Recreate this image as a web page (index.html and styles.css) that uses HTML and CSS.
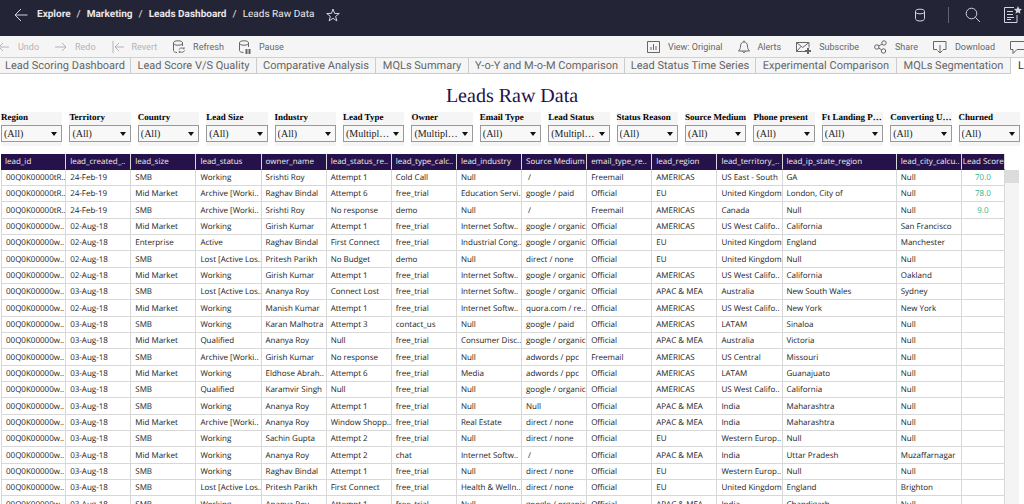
FILE: index.html
```html
<!DOCTYPE html>
<html lang="en">

<head>
    <meta charset="UTF-8">
    <meta name="viewport" content="width=device-width, initial-scale=1.0">
    <title>Leads Raw Data</title>
    <link rel="stylesheet" href="styles.css">
</head>

<body>
    <header class="topbar">
        <button class="icon-btn" aria-label="Back">
            <svg width="14" height="14" viewBox="0 0 14 14"><path d="M13.5 7H1M7 1L1 7l6 6" /></svg>
        </button>
        <nav class="crumbs">
            <a href="#">Explore</a><span>/</span>
            <a href="#">Marketing</a><span>/</span>
            <a href="#">Leads Dashboard</a><span>/</span>
            <span class="current">Leads Raw Data</span>
        </nav>
        <button class="icon-btn" aria-label="Favorite">
            <svg width="14" height="14" viewBox="0 0 14 14"><path d="M7 1l1.6 4.400 4.700.1-3.700 2.900 1.300 4.500L7 10.300l-3.900 2.600 1.300-4.500L.7 5.500l4.700-.1z" /></svg>
        </button>
        <div class="topbar-right">
            <button class="icon-btn" aria-label="Data sources">
                <svg width="12" height="14" viewBox="0 0 12 14"><ellipse cx="6" cy="3.500" rx="4.500" ry="2.300" /><path d="M1.500 3.500v7c0 1.500 1.500 2.500 4.500 2.500s4.500-1 4.500-2.500v-7" /></svg>
            </button>
            <div class="divider"></div>
            <button class="icon-btn" aria-label="Search">
                <svg width="16" height="16" viewBox="0 0 16 16"><circle cx="6.500" cy="6.500" r="5.300" /><path d="M10.500 10.500l4.500 4.500" /></svg>
            </button>
            <button class="icon-btn" aria-label="Content">
                <svg width="19" height="18" viewBox="0 0 19 18"><path d="M11 1.500H1.500v15h12.500V9M4 5.500h6M4 8.500h6M4 11.500h7M4 13.500h4" /><path class="solid" d="M15 0l1.200 2.700 2.800.3-2.100 1.900.6 2.900L15 6.300l-2.500 1.500.6-2.900L11 3l2.800-.3z" /></svg>
            </button>
        </div>
    </header>

    <div class="toolbar">
        <button class="tool disabled">
            <svg width="10" height="14" viewBox="4 0 10 14"><path d="M13 7H3M7 3L3 7l4 4" /></svg>Undo
        </button>
        <button class="tool disabled">
            <svg width="12" height="14" viewBox="0 0 12 14"><path d="M0 7h11M7 3l4 4-4 4" /></svg>Redo
        </button>
        <button class="tool disabled">
            <svg width="12" height="14" viewBox="0 0 12 14"><path d="M1 1v12M12 7H3M7 3L3 7l4 4" /></svg>Revert
        </button>
        <button class="tool">
            <svg width="12" height="14" viewBox="0 0 12 14"><ellipse cx="5" cy="3" rx="4.500" ry="2.200" /><path d="M.5 3v7.500c0 1 1.500 2 3.500 2M9.500 3v3M6 9.500c.7-1.700 3.500-2.200 5-.3v-2M11.500 10.500c-.7 2-3.700 2.500-5.200.5v2" /></svg>Refresh
        </button>
        <button class="tool">
            <svg width="12" height="14" viewBox="0 0 12 14"><ellipse cx="5" cy="3" rx="4.500" ry="2.200" /><path d="M.5 3v7.500c0 1 1.500 2 4 2M9.500 3v4" /><path class="thick" d="M7.500 9v5M10.500 9v5" /></svg>Pause
        </button>
        <button class="tool first-right">
            <svg width="13" height="14" viewBox="0 0 13 14"><path d="M.5 1.500h12v11H.5zM4 10V7M6.500 10V4M9 10V6" /></svg>View: Original
        </button>
        <button class="tool">
            <svg width="12" height="14" viewBox="0 0 12 14"><path d="M.5 11h11c-1.500-1.500-2-3-2-5 0-2.500-1.500-4-3.500-4s-3.500 1.500-3.500 4c0 2-.5 3.500-2 5zM4.500 11c0 2 3 2 3 0M6 2V.5" /></svg>Alerts
        </button>
        <button class="tool">
            <svg width="15" height="14" viewBox="0 0 15 14"><path d="M9 11.500H.5v-9h12.500v5M.5 2.500l6.200 5 6.300-5M.5 11.500l4.500-5" /><path class="thick" d="M12 8v6M9 11h6" /></svg>Subscribe
        </button>
        <button class="tool">
            <svg width="13" height="14" viewBox="0 0 13 14"><circle cx="2.800" cy="7" r="2.200" /><circle cx="10" cy="3" r="2.200" /><circle cx="9.500" cy="11" r="2.200" /><path d="M4.800 6l3.200-1.900M4.800 8l2.800 1.900" /></svg>Share
        </button>
        <button class="tool">
            <svg width="14" height="14" viewBox="0 0 14 14"><path d="M4 9.500H.5v-8h12.500v8H10" /><path d="M7 5v8M4.500 10.500L7 13l2.500-2.500" /></svg>Download
        </button>
        <button class="tool" aria-label="Comments">
            <svg width="14" height="14" viewBox="0 0 14 14"><path d="M16 1.500H.5v8H3v4l4-4h9" /></svg>
        </button>
    </div>

    <nav class="tabs">
        <a class="tab" href="#">Lead Scoring Dashboard</a>
        <a class="tab" href="#">Lead Score V/S Quality</a>
        <a class="tab" href="#">Comparative Analysis</a>
        <a class="tab" href="#">MQLs Summary</a>
        <a class="tab" href="#">Y-o-Y and M-o-M Comparison</a>
        <a class="tab" href="#">Lead Status Time Series</a>
        <a class="tab" href="#">Experimental Comparison</a>
        <a class="tab" href="#">MQLs Segmentation</a>
        <a class="tab active" href="#">Leads Raw Data</a>
    </nav>

    <main>
        <h1>Leads Raw Data</h1>

        <div class="filters" id="filters"></div>

        <div class="sheet">
            <table>
                <colgroup>
                    <col span="12" class="col">
                    <col class="col-state">
                    <col class="col">
                    <col class="col-score">
                </colgroup>
                <thead>
                    <tr id="head"></tr>
                </thead>
                <tbody id="rows"></tbody>
            </table>
            <div class="scrollbar"><div class="thumb"></div></div>
        </div>
    </main>

    <script>
        const filters = [
            ['Region', '(All)'], ['Territory', '(All)'], ['Country', '(All)'],
            ['Lead Size', '(All)'], ['Industry', '(All)'], ['Lead Type', '(Multipl…'],
            ['Owner', '(Multipl…'], ['Email Type', '(All)'], ['Lead Status', '(Multipl…'],
            ['Status Reason', '(All)'], ['Source Medium', '(All)'], ['Phone present', '(All)'],
            ['Ft Landing P…', '(All)'], ['Converting U…', '(All)'], ['Churned', '(All)']
        ];

        const columns = [
            'lead_id', 'lead_created_..', 'lead_size', 'lead_status', 'owner_name',
            'lead_status_re..', 'lead_type_calc..', 'lead_industry', 'Source Medium',
            'email_type_re..', 'lead_region', 'lead_territory_..', 'lead_ip_state_region',
            'lead_city_calcu..', 'Lead Score'
        ];

        // One lead per line, in column order
        const leads = `
00Q0K00000tR..|24-Feb-19|SMB|Working|Srishti Roy|Attempt 1|Cold Call|Null| /|Freemail|AMERICAS|US East - South|GA|Null|70.0
00Q0K00000tR..|24-Feb-19|Mid Market|Archive [Worki..|Raghav Bindal|Attempt 6|free_trial|Education Servi..|google / paid|Official|EU|United Kingdom|London, City of|Null|78.0
00Q0K00000tR..|24-Feb-19|SMB|Archive [Worki..|Srishti Roy|No response|demo|Null| /|Freemail|AMERICAS|Canada|Null|Null|9.0
00Q0K00000w..|02-Aug-18|Mid Market|Working|Girish Kumar|Attempt 1|free_trial|Internet Softw..|google / organic|Official|AMERICAS|US West Califo..|California|San Francisco|
00Q0K00000w..|02-Aug-18|Enterprise|Active|Raghav Bindal|First Connect|free_trial|Industrial Cong..|google / organic|Official|EU|United Kingdom|England|Manchester|
00Q0K00000w..|02-Aug-18|SMB|Lost [Active Los..|Pritesh Parikh|No Budget|demo|Null|direct / none|Official|EU|United Kingdom|Null|Null|
00Q0K00000w..|02-Aug-18|Mid Market|Working|Girish Kumar|Attempt 1|free_trial|Internet Softw..|google / organic|Official|AMERICAS|US West Califo..|California|Oakland|
00Q0K00000w..|03-Aug-18|SMB|Lost [Active Los..|Ananya Roy|Connect Lost|free_trial|Internet Softw..|google / organic|Official|APAC & MEA|Australia|New South Wales|Sydney|
00Q0K00000w..|02-Aug-18|Mid Market|Working|Manish Kumar|Attempt 1|free_trial|Internet Softw..|quora.com / re..|Official|AMERICAS|US West Califo..|New York|New York|
00Q0K00000w..|03-Aug-18|SMB|Working|Karan Malhotra|Attempt 3|contact_us|Null|google / paid|Official|AMERICAS|LATAM|Sinaloa|Null|
00Q0K00000w..|03-Aug-18|Mid Market|Qualified|Ananya Roy|Null|free_trial|Consumer Disc..|google / organic|Official|APAC & MEA|Australia|Victoria|Null|
00Q0K00000w..|03-Aug-18|SMB|Archive [Worki..|Girish Kumar|No response|free_trial|Null|adwords / ppc|Freemail|AMERICAS|US Central|Missouri|Null|
00Q0K00000w..|03-Aug-18|Mid Market|Working|Eldhose Abrah..|Attempt 6|free_trial|Media|adwords / ppc|Official|AMERICAS|LATAM|Guanajuato|Null|
00Q0K00000w..|03-Aug-18|SMB|Qualified|Karamvir Singh|Null|free_trial|Null|google / organic|Official|AMERICAS|US West Califo..|California|Null|
00Q0K00000w..|03-Aug-18|SMB|Working|Ananya Roy|Attempt 1|free_trial|Null|Null|Official|APAC & MEA|India|Maharashtra|Null|
00Q0K00000w..|03-Aug-18|Mid Market|Archive [Worki..|Ananya Roy|Window Shopp..|free_trial|Real Estate|direct / none|Official|APAC & MEA|India|Maharashtra|Null|
00Q0K00000w..|03-Aug-18|SMB|Working|Sachin Gupta|Attempt 2|free_trial|Null|direct / none|Official|EU|Western Europ..|Null|Null|
00Q0K00000w..|03-Aug-18|Mid Market|Working|Ananya Roy|Attempt 2|chat|Internet Softw..| /|Official|APAC & MEA|India|Uttar Pradesh|Muzaffarnagar|
00Q0K00000w..|03-Aug-18|SMB|Working|Raghav Bindal|Attempt 1|free_trial|Null|direct / none|Official|EU|Western Europ..|Null|Null|
00Q0K00000w..|03-Aug-18|SMB|Lost [Active Los..|Pritesh Parikh|First Connect|free_trial|Health & Welln..|direct / none|Official|EU|United Kingdom|England|Brighton|
00Q0K00000w..|03-Aug-18|SMB|Working|Ananya Roy|Attempt 1|free_trial|Null|google / organic|Official|APAC & MEA|India|Chandigarh|Null|
`.trim().split('\n').map(line => line.split('|'));

        const filterBox = document.getElementById('filters');
        filters.forEach(([name, value], i) => {
            const box = document.createElement('div');
            box.className = 'filter';
            box.innerHTML = `
                <label for="filter${i}">${name}</label>
                <div class="select"><select id="filter${i}"><option>${value}</option></select></div>`;
            filterBox.appendChild(box);
        });

        function addCell(row, tag, text) {
            const cell = document.createElement(tag);
            cell.textContent = text;
            row.appendChild(cell);
        }

        const head = document.getElementById('head');
        columns.forEach(name => addCell(head, 'th', name));

        const body = document.getElementById('rows');
        leads.forEach(lead => {
            const tr = document.createElement('tr');
            lead.forEach(value => addCell(tr, 'td', value));
            body.appendChild(tr);
        });
    </script>
</body>

</html>
```
FILE: styles.css
```css
* {
    box-sizing: border-box;
}

body {
    margin: 0;
    height: 100vh;
    display: flex;
    flex-direction: column;
    overflow: hidden;
    background-color: #fff;
    font-family: Roboto, "Liberation Sans", sans-serif;
    text-rendering: geometricPrecision;
}

button {
    padding: 0;
    border: none;
    background: none;
    font-family: inherit;
    cursor: pointer;
}

a {
    color: inherit;
    text-decoration: none;
}

svg {
    display: block;
    flex: none;
    fill: none;
    stroke: currentColor;
    stroke-width: 1;
}

.solid {
    fill: currentColor;
    stroke: none;
}

.thick {
    stroke-width: 2;
}

/* Top bar */
.topbar {
    flex: none;
    display: flex;
    align-items: center;
    height: 36px;
    padding: 0 2px 7px 14px;
    background-color: #232536;
    color: #e8e8ec;
}

.icon-btn {
    color: #d4d4dc;
}

.crumbs {
    display: flex;
    gap: 6px;
    margin: 0 12px 0 9px;
    font-size: 10px;
    font-weight: bold;
    line-height: 14px;
}

.crumbs span {
    font-weight: normal;
}

.topbar-right {
    display: flex;
    align-items: center;
    gap: 22px;
    margin-left: auto;
}

.divider {
    width: 1px;
    height: 16px;
    background-color: #62636f;
}

.topbar-right .divider + .icon-btn {
    margin-left: -6px;
}

/* Toolbar */
.toolbar {
    flex: none;
    display: flex;
    align-items: center;
    gap: 15px;
    height: 21px;
    background-color: #f5f5f5;
}

.tool {
    display: flex;
    flex: none;
    align-items: center;
    gap: 8px;
    color: #666;
    font-size: 9px;
    line-height: 14px;
}

.tool.disabled {
    margin-right: 1px;
    color: #b4b4b4;
}

.first-right {
    margin-left: auto;
}

/* Sheet tabs */
.tabs {
    flex: none;
    display: grid;
    grid-template-columns: 131px 126px 119px 93px 156px 131px 141px 114px 120px;
    height: 17px;
    border-top: 1px solid #d0d0d0;
    overflow: hidden;
}

.tab {
    border-right: 1px solid #ccc;
    border-bottom: 1px solid #ccc;
    background-color: #f5f5f5;
    color: #666;
    font-size: 11px;
    line-height: 15px;
    text-align: center;
    white-space: nowrap;
}

.tab.active {
    border-bottom: none;
    padding-left: 7px;
    background-color: #fff;
    color: #333;
    text-align: left;
}

/* Dashboard */
main {
    flex: 1;
    min-height: 0;
    display: flex;
    flex-direction: column;
}

h1 {
    margin: 10px 0 4px;
    color: #24124c;
    font-family: "Liberation Serif", serif;
    font-size: 20px;
    font-weight: normal;
    line-height: 24px;
    text-align: center;
}

.filters {
    flex: none;
    display: grid;
    grid-template-columns: repeat(15, minmax(0, 1fr));
    gap: 7px;
    margin-bottom: 8px;
    padding: 0 4px 0 1px;
    font-family: "Liberation Serif", serif;
}

.filter {
    padding-bottom: 4px;
    background-color: #f5f5f5;
}

.filter label {
    display: block;
    margin-bottom: 3px;
    font-size: 9px;
    font-weight: bold;
    line-height: 10px;
    white-space: nowrap;
}

.select {
    position: relative;
}

.select::after {
    content: "";
    position: absolute;
    top: 7px;
    right: 5px;
    border: 3px solid transparent;
    border-top: 4px solid #111;
    border-bottom: none;
    pointer-events: none;
}

.select select {
    display: block;
    width: 100%;
    height: 17px;
    padding: 0 0 0 2px;
    border: 1px solid #999;
    border-radius: 0;
    background-color: #f8f8f8;
    color: #222;
    font-family: inherit;
    font-size: 10px;
    appearance: none;
}

/* Leads table */
.sheet {
    flex: 1;
    min-height: 0;
    display: flex;
    align-items: flex-start;
    padding: 0 5px 0 1px;
    overflow: hidden;
}

table {
    width: 100%;
    table-layout: fixed;
    border-collapse: separate;
    border-spacing: 0;
    font-family: "Open Sans", sans-serif;
    font-size: 8px;
    line-height: 15px;
}

.col {
    width: 65px;
}

.col-state {
    width: 114px;
}

.col-score {
    width: 43px;
}

th,
td {
    height: 16px;
    padding: 0 0 0 4px;
    border-right: 1px solid #d8d8d8;
    border-bottom: 1px solid #d8d8d8;
    color: #222;
    text-align: left;
    white-space: pre;
    overflow: hidden;
}

th {
    border-bottom-color: #26124a;
    background-color: #26124a;
    color: #eee;
    font-weight: normal;
}

tbody tr:nth-child(3n) td {
    height: 17px;
}

td:first-child {
    border-left: 1px solid #d8d8d8;
}

th:last-child {
    padding-left: 1px;
}

td:last-child {
    padding: 0;
    color: #2bb583;
    text-align: center;
}

.scrollbar {
    flex: none;
    align-self: stretch;
    width: 14px;
    margin-top: 16px;
    background-color: #f4f4f4;
}

.thumb {
    height: 13px;
    background-color: #dcdcdc;
}
```
